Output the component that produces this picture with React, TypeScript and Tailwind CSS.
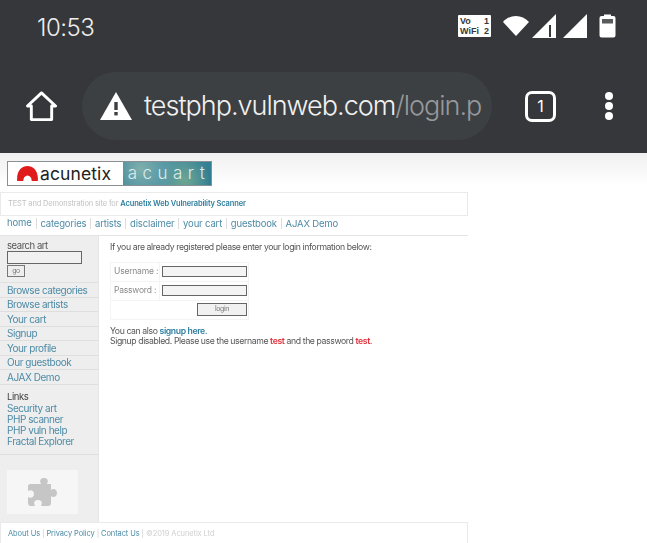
const sideLinks = ["Browse categories", "Browse artists", "Your cart", "Signup", "Your profile", "Our guestbook", "AJAX Demo"];
const navLinks = ["home", "categories", "artists", "disclaimer", "your cart", "guestbook", "AJAX Demo"];
const extra = ["Security art", "PHP scanner", "PHP vuln help", "Fractal Explorer"];

function StatusIcons() {
  return (
    <div className="flex items-center gap-[7px]">
      <div className="flex h-[22px] w-[33px] flex-col justify-center gap-[1px] rounded-[1px] bg-white px-[2px] font-['Liberation_Sans',sans-serif] text-[9px] leading-[9px] font-bold text-[#36373a]">
        <div className="flex justify-between"><span>Vo</span><span>1</span></div>
        <div className="flex justify-between"><span>WiFi</span><span>2</span></div>
      </div>
      <svg width="26" height="22" viewBox="0 0 26 22" className="ml-[5px]"><path d="M0 7 C7 -1 19 -1 26 7 L13 21 Z" fill="#fff" /></svg>
      <svg width="24" height="24" viewBox="0 0 24 24" className="-ml-[4px]"><path d="M0 24 L24 0 V24 Z" fill="#fff" /><rect x="17" y="11" width="2" height="12" fill="#36373a" /></svg>
      <svg width="24" height="24" viewBox="0 0 24 24"><path d="M0 24 L24 0 V24 Z" fill="#fff" /></svg>
      <svg width="17" height="24" viewBox="0 0 17 24" className="ml-[5px]"><path d="M5 2 V0.5 H12 V2 H14.5 Q16.5 2 16.5 4 V21.5 Q16.5 23.5 14.5 23.5 H2.5 Q0.5 23.5 0.5 21.5 V4 Q0.5 2 2.5 2 Z" fill="#fff" /><rect x="3" y="5" width="11" height="4.5" fill="#5a5b5e" /></svg>
    </div>
  );
}

function Browser() {
  return (
    <header className="flex h-[153px] flex-col bg-[#36373a] font-['Inter',sans-serif]">
      <div className="flex h-[72px] items-start justify-between pt-[14px] pr-[31px] pl-[37px]">
        <span className="text-[24px] leading-[28px] font-light tracking-[-0.5px] text-[#eeeeee]">10:53</span>
        <StatusIcons />
      </div>
      <div className="flex items-center">
        <div className="flex w-[82px] justify-center">
          <svg width="31" height="31" viewBox="0 0 32 32" fill="none" stroke="#fff" strokeWidth="3" strokeLinejoin="round"><path d="M1.5 15.5 L16 2 L30.5 15.5 H26.5 V29.5 H5.5 V15.5 Z" /></svg>
        </div>
        <div className="flex h-[68px] w-[410px] items-center overflow-hidden rounded-[34px] bg-[#3d4043] pl-[18px]">
          <svg width="32" height="28" viewBox="0 0 32 28" className="shrink-0"><path d="M16 0 L32 28 H0 Z" fill="#fff" /><rect x="14.3" y="10" width="3.4" height="8" fill="#3d4043" /><rect x="14.3" y="20" width="3.4" height="3.4" fill="#3d4043" /></svg>
          <span className="ml-[12px] text-[27px] leading-[34px] font-light tracking-[-1px] whitespace-nowrap text-[#f1f1f1]">
            testphp.vulnweb.com<span className="text-[#96999c]">/login.p</span>
          </span>
        </div>
        <div className="ml-[33px] flex h-[31px] w-[31px] items-center justify-center rounded-[7px] border-[3px] border-white text-[16px] text-white">1</div>
        <div className="ml-[49px] flex flex-col gap-[2.5px]">
          <span className="h-[7.500px] w-[7.500px] rounded-full bg-white" />
          <span className="h-[7.500px] w-[7.500px] rounded-full bg-white" />
          <span className="h-[7.500px] w-[7.500px] rounded-full bg-white" />
        </div>
      </div>
    </header>
  );
}

function Logo() {
  return (
    <div className="ml-[7px] flex h-[25px] w-[205px] border border-[#8a8f93]">
      <div className="flex w-[115px] items-center bg-white pl-[9px]">
        <svg width="21" height="15" viewBox="0 0 22 16" className="shrink-0"><path d="M0 16 C-1 5 5 0 11 0 C17 0 23 5 22 16 H15.5 A4.5 6 0 1 0 6.500 16 Z" fill="#e01b1b" /></svg>
        <span className="ml-[2px] text-[17.5px] leading-none font-normal tracking-[0.1px] text-[#222]">acunetix</span>
      </div>
      <div className="flex flex-1 items-center justify-center bg-[radial-gradient(circle_at_20%_30%,#7fb0ae,transparent_45%),radial-gradient(circle_at_70%_80%,#6ea58f,transparent_40%),linear-gradient(100deg,#3a8296,#4d93a5_50%,#2f7c90)] pl-[4px] text-[17px] leading-none font-light tracking-[5.5px] text-[#dcecee]">
        acuart
      </div>
    </div>
  );
}

function Field({ label }: { label: string }) {
  return (
    <div className="flex h-[19px] border-b border-[#f4f4f4]">
      <div className="flex w-[49px] items-center border-r border-[#f4f4f4] pl-[3px] text-[8.5px] tracking-[-0.2px] whitespace-nowrap text-[#8a8a8a]">{label}</div>
      <div className="flex items-center pl-[2px]">
        <div className="h-[11px] w-[85px] border-[1.5px] border-[#666] bg-[#f4f4f4]" />
      </div>
    </div>
  );
}

function Sidebar() {
  return (
    <aside className="flex w-[99px] shrink-0 flex-col border-r border-[#e6e6e6] bg-[#eeeeee] text-[10px] tracking-[-0.45px] text-[#4d8ba6]">
      <div className="h-[47px] border-b border-[#e0e0e0] pt-[4px] pl-[7px]">
        <div className="text-[9.5px] leading-[11px] text-[#555]">search art</div>
        <div className="h-[13px] w-[75px] border-[1.5px] border-[#666] bg-[#f1f1f1]" />
        <div className="mt-[1px] flex h-[12px] w-[18px] items-center justify-center border-[1.5px] border-[#777] bg-[#eee] text-[7px] text-[#777]">go</div>
      </div>
      {sideLinks.map((link) => (
        <div key={link} className="flex h-[14.500px] items-center border-b border-[#dedede] pl-[7px] leading-none">{link}</div>
      ))}
      <div className="border-b border-[#dedede] pt-[6px] pb-[7px] pl-[7px]">
        <div className="mb-[1px] text-[9.5px] leading-[11px] text-[#444]">Links</div>
        {extra.map((link) => <div key={link} className="leading-[11px]">{link}</div>)}
      </div>
      <div className="mt-[15px] ml-[7px] flex h-[44px] w-[71px] items-center justify-center bg-[#f6f6f6]">
        <svg width="29" height="28" viewBox="0 0 29 28" fill="#c6c6c6"><path d="M9 6 H13 C11 2 13 0 16 0 C19 0 21 2 19 6 H23 V12 C25 10 29 11 29 15 C29 19 25 20 23 18 V25 C23 27 22 28 20 28 H13 C15 24 13 22 10 22 C7 22 5 24 7 28 H3 C1 28 0 27 0 25 V19 C3 21 6 19 6 16 C6 13 3 11 0 13 V8 C0 7 1 6 2 6 Z" /></svg>
      </div>
    </aside>
  );
}

function Main() {
  return (
    <main className="flex-1 pt-[6px] pl-[11px] text-[8.700px] leading-[10.500px] tracking-[-0.4px] text-[#555]">
      <p>If you are already registered please enter your login information below:</p>
      <div className="mt-[9px] w-[139px] border border-[#f4f4f4]">
        <Field label="Username :" />
        <Field label="Password :" />
        <div className="flex h-[18px] items-center justify-end pr-[1px]">
          <div className="flex h-[13px] w-[50px] items-center justify-center border-[1.5px] border-[#666] bg-[#f1f1f1] text-[7px] text-[#777]">login</div>
        </div>
      </div>
      <p className="mt-[6px]">You can also <span className="font-semibold text-[#2f7f9f]">signup here.</span></p>
      <p>Signup disabled. Please use the username <span className="font-semibold text-[#e2333d]">test</span> and the password <span className="font-semibold text-[#e2333d]">test.</span></p>
    </main>
  );
}

export default function App() {
  return (
    <div className="h-[543px] w-[647px] overflow-hidden bg-white font-['Inter',sans-serif]">
      <Browser />
      <div className="bg-gradient-to-b from-[#f0f0f0] to-white pt-[8px]">
        <Logo />
      </div>
      <div className="w-[468px] blur-[0.3px]">
        <div className="mt-[6px] flex h-[24px] items-center border border-[#eaeaea] pl-[7px] text-[7.500px] tracking-[-0.15px] text-[#c2c2c2]">
          TEST and Demonstration site for&nbsp;<span className="font-semibold text-[#2f7f9f]">Acunetix Web Vulnerability Scanner</span>
        </div>
        <nav className="flex h-[20px] items-center border-b border-[#e4e4e4] pb-[4px] pl-[7px] text-[9.500px] tracking-[-0.15px] text-[#4d8ba6]">
          {navLinks.map((link, i) => (
            <span key={link} className={i === 0 ? "pr-[4px]" : "border-l border-[#ddd] px-[3.800px] leading-[11px]"}>{link}</span>
          ))}
        </nav>
        <div className="flex h-[286px]">
          <Sidebar />
          <Main />
        </div>
        <footer className="flex h-[24px] items-center border border-[#eaeaea] pl-[7px] text-[7.500px] tracking-[-0.1px] text-[#4d8ba6]">
          <span>About Us</span><span className="mx-[2px] text-[#ccc]">|</span>
          <span>Privacy Policy</span><span className="mx-[2px] text-[#ccc]">|</span>
          <span>Contact Us</span><span className="mx-[2px] text-[#ccc]">|</span>
          <span className="text-[#d0d0d0]">©2019 Acunetix Ltd</span>
        </footer>
      </div>
    </div>
  );
}
